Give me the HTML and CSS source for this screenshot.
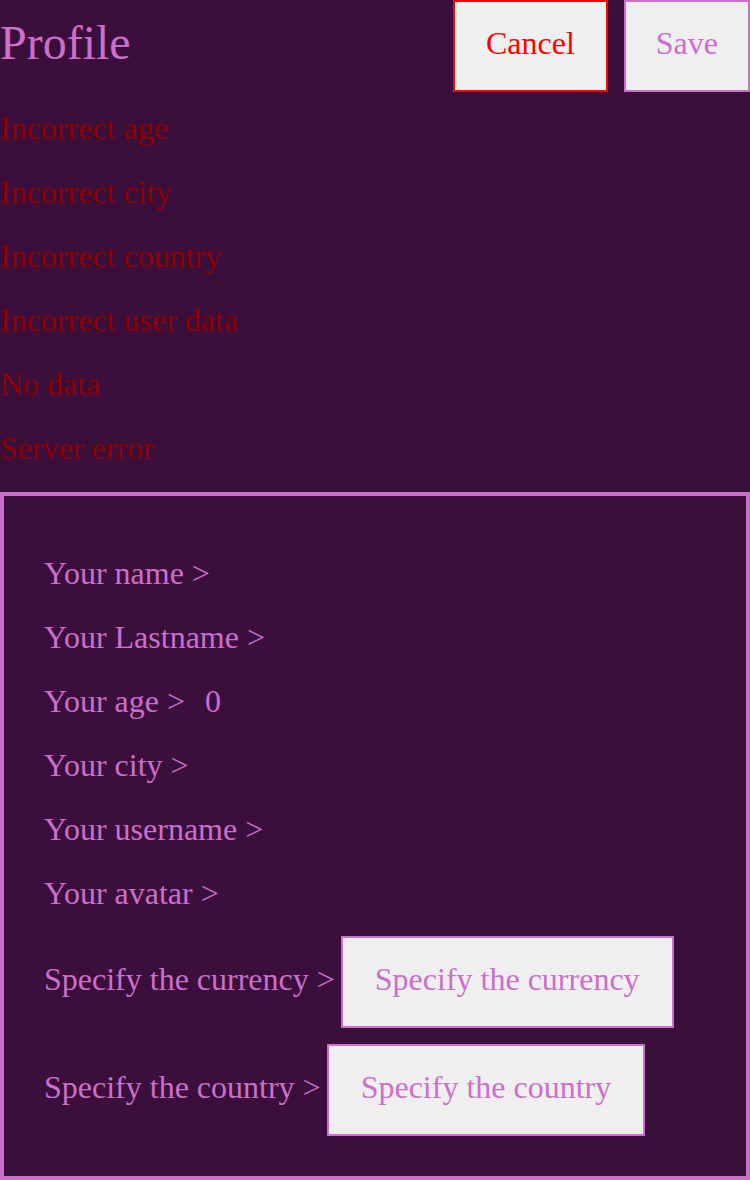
FILE: index.html
```html
<!DOCTYPE html>
<html lang="en">
<head>
<meta charset="utf-8">
<title>Profile</title>
<link rel="stylesheet" href="styles.css">
</head>
<body>
<div class="page">
  <header class="header">
    <h1 class="title">Profile</h1>
    <div class="actions">
      <button class="btn btn--cancel" type="button">Cancel</button>
      <button class="btn btn--save" type="button">Save</button>
    </div>
  </header>
  <div class="errors">
    <p class="error">Incorrect age</p>
    <p class="error">Incorrect city</p>
    <p class="error">Incorrect country</p>
    <p class="error">Incorrect user data</p>
    <p class="error">No data</p>
    <p class="error">Server error</p>
  </div>
  <form class="card">
    <div class="group">
      <div class="row"><span class="label">Your name &gt;</span></div>
      <div class="row"><span class="label">Your Lastname &gt;</span></div>
      <div class="row"><span class="label">Your age &gt;</span><span class="value">0</span></div>
      <div class="row"><span class="label">Your city &gt;</span></div>
      <div class="row"><span class="label">Your username &gt;</span></div>
      <div class="row"><span class="label">Your avatar &gt;</span></div>
    </div>
    <div class="group">
      <div class="row row--select"><span class="label">Specify the currency &gt;</span><button class="btn btn--select" type="button">Specify the currency</button></div>
      <div class="row row--select"><span class="label">Specify the country &gt;</span><button class="btn btn--select" type="button">Specify the country</button></div>
    </div>
  </form>
</div>
</body>
</html>
```
FILE: styles.css
```css
html, body {
  margin: 0;
  padding: 0;
  background: #3b0f3c;
}
body {
  font-family: "Liberation Serif", "Times New Roman", serif;
  font-size: 32px;
  color: #cc6ecc;
}
.page {
  width: 750px;
}
.header {
  display: flex;
  justify-content: space-between;
  align-items: flex-start;
  height: 92px;
}
.title {
  margin: 0;
  padding-top: 15px;
  font-size: 48px;
  font-weight: normal;
  line-height: normal;
  color: #cc6ecc;
}
.actions {
  display: flex;
  gap: 16px;
}
.btn {
  box-sizing: border-box;
  font-family: "Liberation Serif", "Times New Roman", serif;
  font-size: 32px;
  background: #efefef;
  padding: 0 30px 6px;
  height: 92px;
  border: 2px solid #cc6ecc;
  color: #cc6ecc;
  margin: 0;
  line-height: normal;
}
.btn--cancel {
  padding: 0 31px 6px;
  border-color: #ff0000;
  color: #ff0000;
}
.btn--select {
  padding: 0 32px 6px;
}
.errors {
  margin: 4px 0 12px;
}
.error {
  margin: 0;
  height: 64px;
  line-height: 64px;
  color: #8b0000;
}
.card {
  border: 4px solid #cc6ecc;
  padding: 53px 40px 40px;
  display: flex;
  flex-direction: column;
  gap: 19px;
}
.group {
  display: flex;
  flex-direction: column;
  gap: 16px;
}
.row {
  display: flex;
  align-items: center;
  height: 48px;
}
.row--select {
  height: 92px;
  gap: 6px;
  align-items: baseline;
}
.value {
  margin-left: 20px;
}
```
